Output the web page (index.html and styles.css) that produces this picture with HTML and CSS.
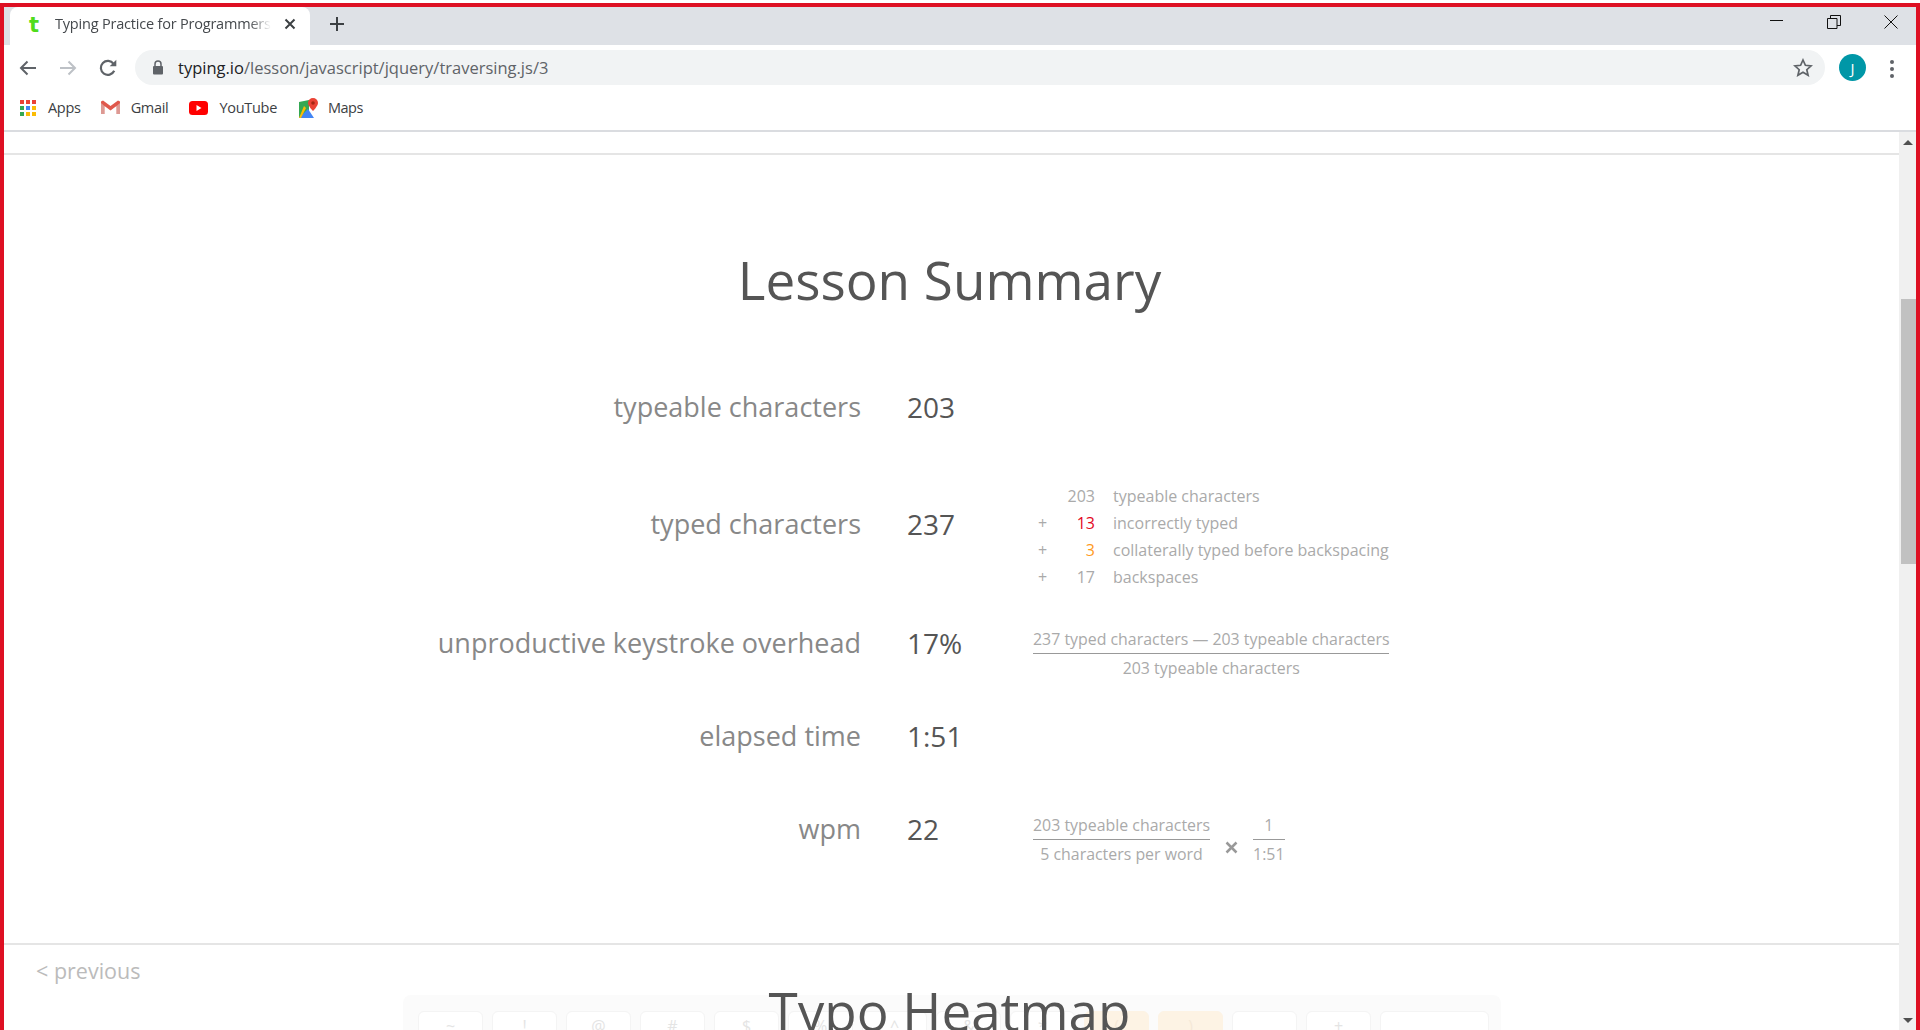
FILE: index.html
```html
<!DOCTYPE html>
<html lang="en">

<head>
    <meta charset="UTF-8" />
    <title>Typing Practice for Programmers</title>
    <link rel="stylesheet" href="styles.css">
</head>

<body>
    <div class="window">
        <div class="tabstrip">
            <div class="tab">
                <span class="favicon">t</span>
                <span class="tab-title">Typing Practice for Programmers</span>
                <svg class="tab-close" width="12" height="12" viewBox="0 0 12 12"><path d="M1.5 1.5l9 9M10.5 1.5l-9 9" stroke="#3c4043" stroke-width="2" fill="none"/></svg>
            </div>
            <svg class="new-tab" width="16" height="16" viewBox="0 0 16 16"><path d="M8 1v14M1 8h14" stroke="#3c4043" stroke-width="2" fill="none"/></svg>
            <div class="window-controls">
                <svg width="14" height="14" viewBox="0 0 14 14"><path d="M0 5.5h13" stroke="#111" fill="none"/></svg>
                <svg width="14" height="14" viewBox="0 0 14 14"><path d="M.5 3.5h9.500v10h-9.500zM3.500 3.500v-3h10v10h-3.500" stroke="#111" fill="none"/></svg>
                <svg width="14" height="14" viewBox="0 0 14 14"><path d="M.5.5l13 13M13.500.5l-13 13" stroke="#111" fill="none"/></svg>
            </div>
        </div>

        <div class="toolbar">
            <div class="nav-row">
                <svg class="nav-icon" width="18" height="16" viewBox="0 0 18 16"><path d="M17 8H2M8.500 1.500L2 8l6.500 6.500" stroke="#5f6368" stroke-width="2" fill="none"/></svg>
                <svg class="nav-icon" width="18" height="16" viewBox="0 0 18 16"><path d="M1 8h15M9.500 1.500L16 8l-6.500 6.500" stroke="#bdc1c6" stroke-width="2" fill="none"/></svg>
                <svg class="nav-icon nav-reload" width="20" height="20" viewBox="0 0 18 18"><path d="M14.600 11.500a6.300 6.300 0 1 1-.6-6.300" stroke="#5f6368" stroke-width="2" fill="none"/><path d="M16.500 1.500v6h-6z" fill="#5f6368"/></svg>
                <div class="omnibox">
                    <svg class="lock" width="12" height="15" viewBox="0 0 12 15"><path d="M3 6V4a3 3 0 0 1 6 0v2" stroke="#5f6368" stroke-width="1.500" fill="none"/><rect x="1" y="6" width="10" height="8.500" rx="1" fill="#5f6368"/></svg>
                    <span class="url"><b>typing.io</b>/lesson/javascript/jquery/traversing.js/3</span>
                    <svg class="star" width="20" height="19" viewBox="0 0 20 19"><path d="M10 2l2.400 5.300 5.700.6-4.300 3.800 1.300 5.600-5.100-3-5.100 3 1.300-5.600L1.900 7.900l5.700-.6z" stroke="#5f6368" stroke-width="1.700" fill="none"/></svg>
                </div>
                <span class="avatar">J</span>
                <span class="kebab"><i></i><i></i><i></i></span>
            </div>
            <div class="bookmarks">
                <span class="bookmark bookmark-apps">
                    <svg width="16" height="16" viewBox="0 0 16 16">
                        <rect x="0" y="0" width="4" height="4" fill="#ea4335"/><rect x="6" y="0" width="4" height="4" fill="#ea4335"/><rect x="12" y="0" width="4" height="4" fill="#ea4335"/>
                        <rect x="0" y="6" width="4" height="4" fill="#34a853"/><rect x="6" y="6" width="4" height="4" fill="#4285f4"/><rect x="12" y="6" width="4" height="4" fill="#fbbc05"/>
                        <rect x="0" y="12" width="4" height="4" fill="#34a853"/><rect x="6" y="12" width="4" height="4" fill="#fbbc05"/><rect x="12" y="12" width="4" height="4" fill="#fbbc05"/>
                    </svg>
                    Apps
                </span>
                <span class="bookmark bookmark-gmail">
                    <svg width="19" height="15" viewBox="0 0 19 15"><path d="M0 1.500v12.500h3.500V6l6 4.500 6-4.500v8H19V1.500L17 .5 9.500 6 2 .5z" fill="#e0584c"/><path d="M3.500 6v8H0V3z" fill="#d9d9d9" opacity=".5"/><path d="M15.500 6v8H19V3z" fill="#d9d9d9" opacity=".5"/></svg>
                    Gmail
                </span>
                <span class="bookmark bookmark-youtube">
                    <svg width="19" height="14" viewBox="0 0 19 14"><rect width="19" height="14" rx="3.500" fill="#f00"/><path d="M7.500 4l5 3-5 3z" fill="#fff"/></svg>
                    YouTube
                </span>
                <span class="bookmark bookmark-maps">
                    <svg width="19" height="20" viewBox="0 0 19 20">
                        <path d="M0 4l10-2v16L0 20z" fill="#34a853"/>
                        <path d="M0 20l9-9 6 9z" fill="#4285f4"/>
                        <path d="M0 20l5-12 2 2-5 10z" fill="#fbbc05"/>
                        <path d="M14 0a5 5 0 0 0-5 5c0 3 5 8 5 8s5-5 5-8a5 5 0 0 0-5-5z" fill="#ea4335"/>
                        <circle cx="14" cy="5" r="1.800" fill="#a52714"/>
                    </svg>
                    Maps
                </span>
            </div>
        </div>

        <div class="viewport">
            <div class="page">
                <div class="page-top"></div>

                <section class="summary">
                    <h1 class="heading">Lesson Summary</h1>

                    <div class="stat stat-first">
                        <div class="stat-label">typeable characters</div>
                        <div class="stat-value">203</div>
                    </div>

                    <div class="stat stat-typed">
                        <div class="stat-label">typed characters</div>
                        <div class="stat-value">237</div>
                        <div class="tally">
                            <span></span><span class="num">203</span><span>typeable characters</span>
                            <span>+</span><span class="num num-error">13</span><span>incorrectly typed</span>
                            <span>+</span><span class="num num-collateral">3</span><span>collaterally typed before backspacing</span>
                            <span>+</span><span class="num">17</span><span>backspaces</span>
                        </div>
                    </div>

                    <div class="stat">
                        <div class="stat-label">unproductive keystroke overhead</div>
                        <div class="stat-value">17%</div>
                        <div class="formula">
                            <div class="fraction">
                                <div class="numerator">237 typed characters — 203 typeable characters</div>
                                <div>203 typeable characters</div>
                            </div>
                        </div>
                    </div>

                    <div class="stat">
                        <div class="stat-label">elapsed time</div>
                        <div class="stat-value">1:51</div>
                    </div>

                    <div class="stat">
                        <div class="stat-label">wpm</div>
                        <div class="stat-value">22</div>
                        <div class="formula">
                            <div class="fraction">
                                <div class="numerator">203 typeable characters</div>
                                <div>5 characters per word</div>
                            </div>
                            <svg class="times" width="13" height="13" viewBox="0 0 13 13"><path d="M1.500 1.500l10 10M11.500 1.500l-10 10" stroke="#999" stroke-width="2.500" fill="none"/></svg>
                            <div class="fraction">
                                <div class="numerator">1</div>
                                <div>1:51</div>
                            </div>
                        </div>
                    </div>
                </section>

                <section class="heatmap">
                    <a class="previous">&lt; previous</a>
                    <h1 class="heading heatmap-heading">Typo Heatmap</h1>
                    <div class="keyboard">
                        <span class="key">~</span>
                        <span class="key">!</span>
                        <span class="key">@</span>
                        <span class="key">#</span>
                        <span class="key">$</span>
                        <span class="key">%</span>
                        <span class="key">^</span>
                        <span class="key">&amp;</span>
                        <span class="key">*</span>
                        <span class="key key-warm">(</span>
                        <span class="key key-warm">)</span>
                        <span class="key">_</span>
                        <span class="key">+</span>
                        <span class="key key-wide"></span>
                    </div>
                </section>
            </div>

            <div class="scrollbar">
                <span class="arrow-up"></span>
                <span class="thumb"></span>
                <span class="arrow-down"></span>
            </div>
        </div>
    </div>
</body>

</html>
```

FILE: styles.css
```css
* {
    box-sizing: border-box;
}

html,
body {
    margin: 0;
    padding: 0;
    height: 100%;
    background-color: #fff;
    overflow: hidden;
}

.window {
    margin-top: 3px;
    height: 1027px;
    display: flex;
    flex-direction: column;
    border-top: 4px solid #de1023;
    border-left: 4px solid #de1023;
    border-right: 4px solid #de1023;
    font-family: "Open Sans", sans-serif;
    overflow: hidden;
}

/* Browser chrome */
.tabstrip {
    height: 38px;
    flex: none;
    display: flex;
    align-items: flex-start;
    background-color: #dee1e6;
}

.tab {
    width: 300px;
    height: 38px;
    margin-left: 6px;
    padding: 0 0 5px 19px;
    display: flex;
    align-items: center;
    background: #fff;
    border-radius: 8px 8px 0 0;
}

.favicon {
    width: 26px;
    margin-top: 2px;
    font-family: "DejaVu Sans", sans-serif;
    font-size: 21px;
    font-weight: 700;
    color: #4fdc1c;
}

.tab-title {
    width: 216px;
    font-size: 14.500px;
    color: #45494d;
    white-space: nowrap;
    overflow: hidden;
    letter-spacing: -0.2px;
    -webkit-mask-image: linear-gradient(to right, #000 90%, transparent);
    mask-image: linear-gradient(to right, #000 90%, transparent);
}

.tab-close {
    margin-left: 13px;
}

.new-tab {
    margin: 9px 0 0 19px;
}

.window-controls {
    margin-left: auto;
    padding: 8px 18px 0 0;
    display: flex;
    gap: 43px;
}

.toolbar {
    height: 87px;
    flex: none;
    background: #fff;
    border-bottom: 2px solid #dadce0;
}

.nav-row {
    height: 46px;
    padding: 5px 0 0 15px;
    display: flex;
    align-items: flex-start;
}

.nav-icon {
    margin-top: 10px;
}

.nav-icon + .nav-icon {
    margin-left: 22px;
}

.nav-icon.nav-reload {
    margin: 8px 0 0 21px;
}

.omnibox {
    width: 1690px;
    height: 35px;
    margin-left: 17px;
    padding: 0 12px 0 17px;
    display: flex;
    align-items: center;
    border-radius: 18px;
    background-color: #f1f3f4;
}

.url {
    margin-left: 14px;
    font-size: 16.500px;
    color: #5f6368;
}

.url b {
    font-weight: 400;
    color: #202124;
}

.star {
    margin-left: auto;
}

.avatar {
    width: 27px;
    height: 27px;
    margin: 4px 0 0 14px;
    display: flex;
    align-items: center;
    justify-content: center;
    border-radius: 50%;
    background-color: #0097a7;
    color: #fff;
    font-size: 15px;
}

.kebab {
    margin: 10px 0 0 24px;
    display: flex;
    flex-direction: column;
    gap: 3px;
}

.kebab i {
    width: 4px;
    height: 4px;
    border-radius: 50%;
    background-color: #5f6368;
}

.bookmarks {
    height: 39px;
    padding-left: 16px;
    display: flex;
    align-items: flex-start;
}

.bookmark {
    height: 33px;
    display: flex;
    align-items: center;
    font-size: 14.500px;
    letter-spacing: -0.3px;
    color: #3c4043;
}

.bookmark svg {
    margin-right: 11px;
}

.bookmark-apps svg {
    margin-right: 12px;
}

.bookmark-gmail {
    margin-left: 20px;
}

.bookmark-youtube {
    margin-left: 21px;
}

.bookmark-maps {
    margin-left: 22px;
    letter-spacing: -0.5px;
}

.bookmark-maps svg {
    margin-right: 10px;
}

/* Page area */
.viewport {
    flex: 1;
    min-height: 0;
    display: flex;
    background: #fff;
}

.page {
    flex: 1;
    min-width: 0;
    font-family: "Open Sans", sans-serif;
}

.page-top {
    height: 23px;
    border-bottom: 2px solid #e5e5e5;
}

.summary {
    height: 790px;
    padding-top: 89px;
    border-bottom: 2px solid #e5e5e5;
}

.heading {
    margin: 0;
    padding-right: 4px;
    font-size: 53px;
    font-weight: 400;
    line-height: 72px;
    text-align: center;
    color: #555;
}

.stat {
    height: 93px;
    display: grid;
    column-gap: 46px;
    grid-template-columns: 857px 80px auto;
    align-items: start;
}

.stat-first {
    height: 95px;
    margin-top: 70px;
}

.stat-typed {
    height: 141px;
    padding-top: 22px;
}

.stat-label {
    padding-top: 1px;
    font-size: 27px;
    line-height: 40px;
    text-align: right;
    color: #888;
}

.stat-value {
    padding-top: 1px;
    font-size: 28px;
    line-height: 40px;
    color: #555;
}

.tally {
    margin-top: -20px;
    display: grid;
    grid-template-columns: 18px 44px auto;
    font-size: 16px;
    line-height: 27px;
    color: #aaa;
}

.tally span:nth-child(3n+1) {
    padding-left: 5px;
}

.tally span:nth-child(3n) {
    margin-left: 18px;
}

.tally .num {
    text-align: right;
}

.tally .num-error {
    color: #e3071d;
}

.tally .num-collateral {
    color: #ff9a1c;
}

.formula {
    margin-top: 3px;
    display: flex;
    align-items: center;
    font-size: 15.900px;
    line-height: 28px;
    color: #aaa;
}

.fraction {
    text-align: center;
}

.numerator {
    border-bottom: 1px solid #999;
}

.times {
    margin: 16px 15px 0;
}

/* Bottom of the page, cut off by the window */
.heatmap {
    position: relative;
    padding: 50px 14px 0 0;
}

.previous {
    position: absolute;
    top: 11px;
    left: 32px;
    font-size: 21.500px;
    color: #bbb;
}

.heatmap-heading {
    position: absolute;
    top: 30px;
    left: 0;
    right: 0;
}

.keyboard {
    width: 1098px;
    height: 120px;
    margin-left: 399px;
    padding: 16px 15px;
    display: flex;
    gap: 9px;
    background-color: #fbfbfb;
    border-radius: 8px;
}

.key {
    width: 65px;
    height: 60px;
    flex: none;
    padding-top: 3px;
    text-align: center;
    font-size: 16px;
    color: #e4e4e4;
    background: #fff;
    border: 1px solid #f4f4f4;
    border-radius: 6px;
}

.key-warm {
    background-color: #fdf3e4;
    border-color: #fdf3e4;
    color: #f5e9d8;
}

.key-wide {
    width: 109px;
}

.scrollbar {
    width: 17px;
    flex: none;
    display: flex;
    flex-direction: column;
    align-items: flex-end;
    background-color: #f0f0f0;
}

.arrow-up,
.arrow-down {
    align-self: center;
    width: 0;
    height: 0;
    border-left: 5px solid transparent;
    border-right: 5px solid transparent;
}

.arrow-up {
    margin-top: 8px;
    border-bottom: 5px solid #505050;
}

.arrow-down {
    margin-top: 454px;
    border-top: 5px solid #505050;
}

.thumb {
    width: 15px;
    height: 265px;
    margin-top: 154px;
    background-color: #c1c1c1;
}
```
